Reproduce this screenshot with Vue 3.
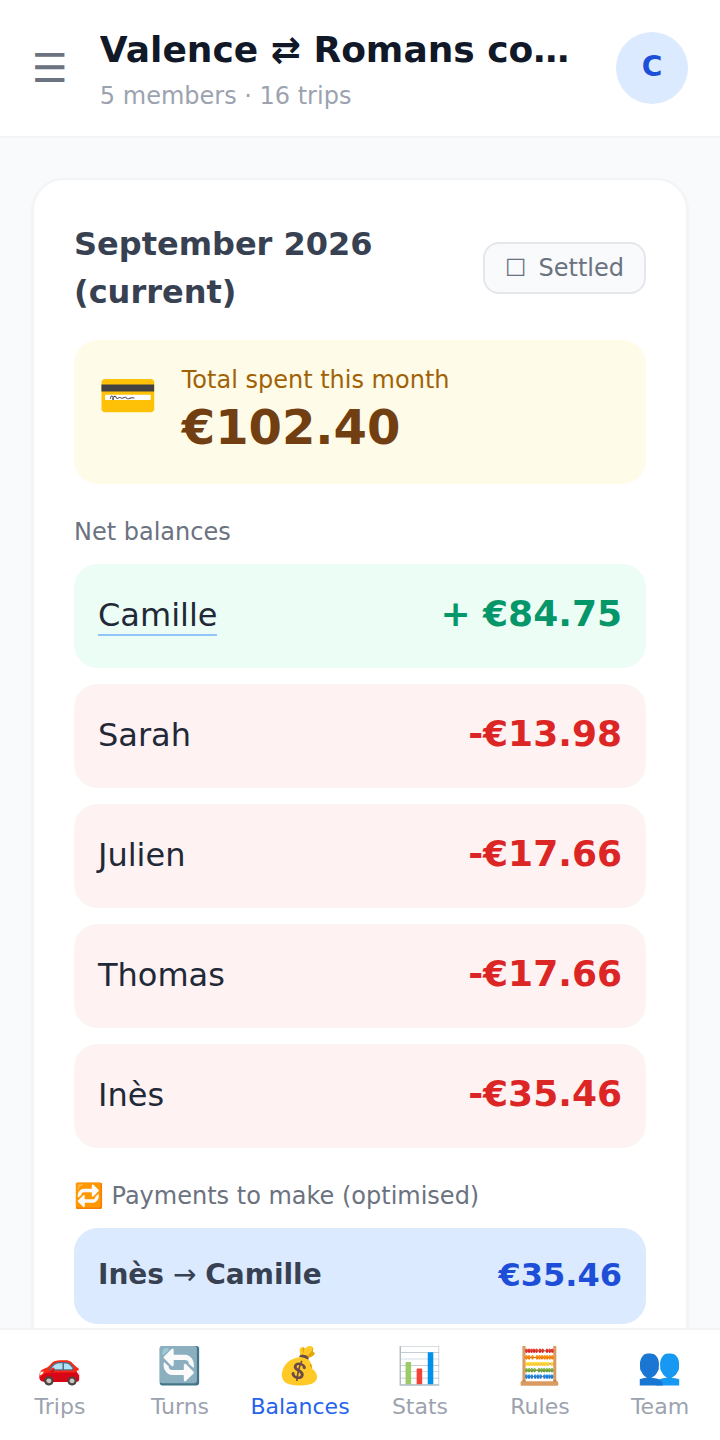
<script setup>
import { ref, computed } from 'vue'

const group = { name: 'Valence ⇄ Romans commute', members: 5, trips: 16 }

const settled = ref(false)
const activeTab = ref('balances')

const balances = [
  { name: 'Camille', amount: 84.75, me: true },
  { name: 'Sarah', amount: -13.98 },
  { name: 'Julien', amount: -17.66 },
  { name: 'Thomas', amount: -17.66 },
  { name: 'Inès', amount: -35.46 },
]

const payments = [{ from: 'Inès', to: 'Camille', amount: 35.46 }]

const tabs = [
  { id: 'trips', icon: '🚗', label: 'Trips' },
  { id: 'turns', icon: '🔄', label: 'Turns' },
  { id: 'balances', icon: '💰', label: 'Balances' },
  { id: 'stats', icon: '📊', label: 'Stats' },
  { id: 'rules', icon: '🧮', label: 'Rules' },
  { id: 'team', icon: '👥', label: 'Team' },
]

const settledMark = computed(() => (settled.value ? '☑' : '☐'))

const euro = (n) => `€${Math.abs(n).toFixed(2)}`
const signed = (n) => (n > 0 ? '+ ' : '-') + euro(n)
</script>

<template>
  <div class="app">
    <header class="topbar">
      <button class="menu-btn" aria-label="Menu">☰</button>
      <div class="heading">
        <h1>{{ group.name }}</h1>
        <p>{{ group.members }} members · {{ group.trips }} trips</p>
      </div>
      <button class="avatar" aria-label="Profile">C</button>
    </header>

    <main class="content">
      <section class="card">
        <div class="card-head">
          <h2>September 2026 (current)</h2>
          <button class="settled-btn" :aria-pressed="settled" @click="settled = !settled">
            <span>{{ settledMark }}</span>
            <span>Settled</span>
          </button>
        </div>

        <div class="total">
          <span class="total-icon">💳</span>
          <div>
            <p class="total-label">Total spent this month</p>
            <p class="total-amount">{{ euro(102.4) }}</p>
          </div>
        </div>

        <h3>Net balances</h3>
        <ul class="rows">
          <li v-for="b in balances" :key="b.name" :class="['row', b.amount > 0 ? 'plus' : 'minus']">
            <span class="name"><span :class="{ me: b.me }">{{ b.name }}</span></span>
            <span class="amount">{{ signed(b.amount) }}</span>
          </li>
        </ul>

        <h3>🔁 Payments to make (optimised)</h3>
        <ul class="rows">
          <li v-for="p in payments" :key="p.from + p.to" class="row payment">
            <span class="route"><b>{{ p.from }}</b> → <b>{{ p.to }}</b></span>
            <span class="due">{{ euro(p.amount) }}</span>
          </li>
        </ul>
      </section>
    </main>

    <nav class="tabbar">
      <button
        v-for="t in tabs"
        :key="t.id"
        :class="['tab', activeTab === t.id && 'active']"
        @click="activeTab = t.id"
      >
        <span class="tab-icon">{{ t.icon }}</span>
        <span class="tab-label">{{ t.label }}</span>
      </button>
    </nav>
  </div>
</template>

<style>
body { margin:0; background:#f9fafb; }
</style>

<style scoped>
.app { height:100vh; display:flex; flex-direction:column; background:#f9fafb; color:#1f2937; font-family:"DejaVu Sans", "Noto Color Emoji", sans-serif; font-size:32px; line-height:48px; }
h1, h2, h3, p, ul { margin:0; padding:0; }
button { font-family:inherit; border:none; padding:0; background:none; cursor:pointer; }

.topbar { display:flex; align-items:center; gap:32px; padding:24px 32px; background:#fff; border-bottom:2px solid #f3f4f6; flex-shrink:0; }
.menu-btn { font-size:40px; line-height:56px; color:#6b7280; }
.heading { flex:1; min-width:0; }
h1 { font-size:36px; line-height:52px; padding-bottom:4px; font-weight:700; color:#111827; white-space:nowrap; overflow:hidden; text-overflow:ellipsis; }
.heading p { font-size:24px; line-height:32px; color:#9ca3af; }
.avatar { width:72px; height:72px; padding-bottom:2px; border-radius:50%; background:#dbeafe; color:#1d4ed8; font-size:28px; line-height:40px; font-weight:700; flex-shrink:0; }

.content { flex:1; min-height:0; overflow-y:auto; scrollbar-width:none; padding:40px 32px; }
.card { background:#fff; border:2px solid #f3f4f6; border-radius:32px; padding:40px; box-shadow:0 2px 4px rgba(0, 0, 0, .05); }
.card-head { display:flex; align-items:center; justify-content:space-between; gap:16px; margin-bottom:24px; }
h2 { font-size:32px; line-height:48px; font-weight:700; color:#374151; }
.settled-btn { display:flex; gap:12px; padding:8px 20px; border:2px solid #e5e7eb; border-radius:16px; background:#f9fafb; color:#6b7280; font-size:24px; line-height:32px; flex-shrink:0; }

.total { display:flex; align-items:flex-start; gap:24px; padding:24px; border-radius:24px; background:#fefce8; }
.total-icon { font-size:48px; line-height:62px; }
.total-label { font-size:24px; line-height:32px; color:#a16207; }
.total-amount { font-size:48px; line-height:62px; padding-bottom:2px; font-weight:700; color:#713f12; }

h3 { font-size:24px; line-height:32px; font-weight:400; color:#6b7280; margin:32px 0 16px; }
.rows { list-style:none; display:flex; flex-direction:column; gap:16px; }
.row { display:flex; align-items:center; justify-content:space-between; padding:24px; border-radius:24px; }
.plus { background:#ecfdf5; }
.minus { background:#fef2f2; }
.name, .due { line-height:46px; padding-bottom:2px; }
.me { border-bottom:2px solid #93c5fd; }
.amount { font-size:36px; line-height:52px; padding-bottom:4px; font-weight:700; }
.plus .amount { color:#059669; }
.minus .amount { color:#dc2626; }
.payment { background:#dbeafe; }
.route { font-size:28px; line-height:38px; padding-bottom:2px; color:#374151; }
.due { font-weight:700; color:#1d4ed8; }

.tabbar { display:flex; background:#fff; border-top:2px solid #f3f4f6; flex-shrink:0; }
.tab { flex:1; display:flex; flex-direction:column; align-items:center; gap:6px; padding:16px 0; color:#9ca3af; }
.tab-icon { font-size:36px; line-height:40px; }
.tab-label { font-size:22px; line-height:30px; padding-bottom:2px; }
.tab.active { color:#2563eb; }
</style>
